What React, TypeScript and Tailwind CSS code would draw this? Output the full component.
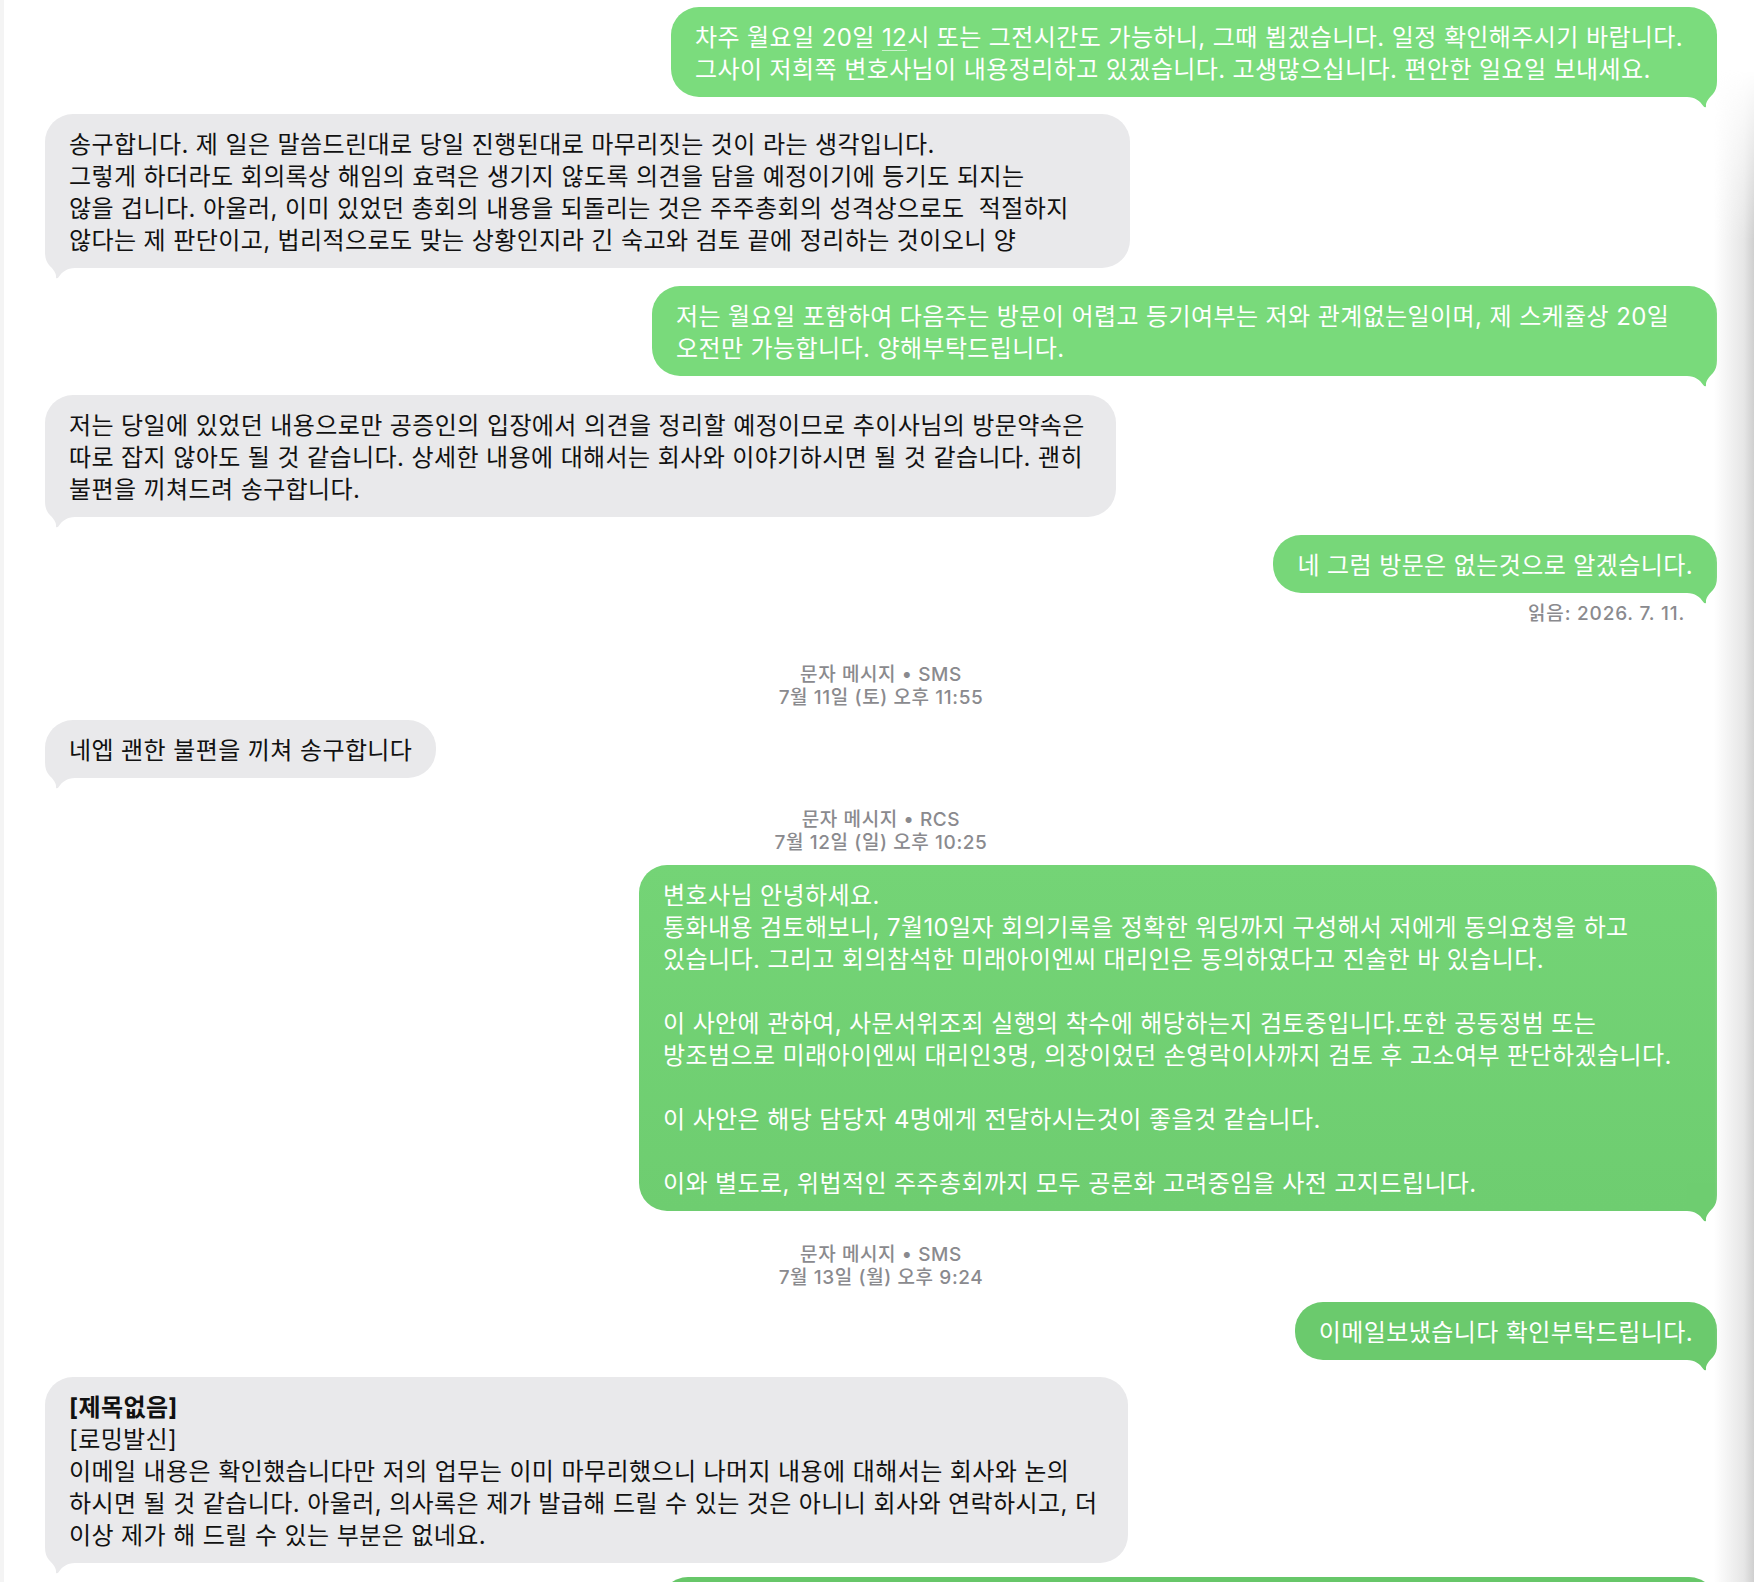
import type { ReactNode } from "react";

type TailProps = {
  side: "left" | "right";
  color: string;
};

// 말풍선 꼬리: 오른쪽 기준으로 그리고 왼쪽은 뒤집어서 사용
const Tail = ({ side, color }: TailProps): JSX.Element => (
  <svg
    className={
      side === "right"
        ? "absolute bottom-[-11px] right-0 h-[40px] w-[30px]"
        : "absolute bottom-[-11px] left-0 h-[40px] w-[30px] -scale-x-100"
    }
    viewBox="0 0 30 40"
  >
    <path
      d="M0,29 C8,29 13,33 16.5,38.3 C17.3,39.6 19.3,40 19,37.8 C18.6,34 22,30 26,26 C28.5,23 30,19 30,13 L30,1 L0,1 Z"
      fill={color}
    />
  </svg>
);

type BubbleProps = {
  children: ReactNode;
  className?: string;
  tail: string;
};

const Sent = ({ children, className = "", tail }: BubbleProps): JSX.Element => (
  <div className="flex justify-end">
    <div className={`relative whitespace-pre rounded-[28px] px-[24px] pb-[11px] pt-[15px] text-white ${className}`}>
      <Tail side="right" color={tail} />
      <div className="relative">{children}</div>
    </div>
  </div>
);

const Received = ({ children, className = "", tail }: BubbleProps): JSX.Element => (
  <div className="flex justify-start">
    <div className={`relative whitespace-pre rounded-[28px] bg-[#e9e9eb] px-[24px] pb-[11px] pt-[15px] text-[#111111] ${className}`}>
      <Tail side="left" color={tail} />
      <div className="relative">{children}</div>
    </div>
  </div>
);

type StampProps = {
  kind: string;
  time: string;
  className?: string;
};

// 날짜/메시지 종류 표시
const Stamp = ({ kind, time, className = "" }: StampProps): JSX.Element => (
  <div className={`text-center text-[19px] font-medium leading-[23px] tracking-[0.6px] text-[#8a8a8e] ${className}`}>
    <p>문자 메시지 • {kind}</p>
    <p>{time}</p>
  </div>
);

const App = (): JSX.Element => {
  return (
    <div className="relative h-[1582px] w-[1754px] overflow-hidden border-l-4 border-[#f4f4f4] bg-white font-['Inter','Noto_Sans_CJK_KR',sans-serif] text-[24px] leading-[32px] tracking-[0.4px]">
      <div className="flex flex-col pl-[41px] pr-[37px] pt-[7px]">
        <Sent className="w-[1046px] bg-[#7bdc7d]" tail="#7bdc7d">
          {"차주 월요일 20일 "}
          <span className="underline decoration-white/60 decoration-1 underline-offset-4">12</span>
          {"시 또는 그전시간도 가능하니, 그때 뵙겠습니다. 일정 확인해주시기 바랍니다.\n그사이 저희쪽 변호사님이 내용정리하고 있겠습니다. 고생많으십니다. 편안한 일요일 보내세요."}
        </Sent>

        <div className="mt-[17px]">
          <Received className="w-[1085px]" tail="#e9e9eb">
            {"송구합니다. 제 일은 말씀드린대로 당일 진행된대로 마무리짓는 것이 라는 생각입니다.\n그렇게 하더라도 회의록상 해임의 효력은 생기지 않도록 의견을 담을 예정이기에 등기도 되지는\n않을 겁니다. 아울러, 이미 있었던 총회의 내용을 되돌리는 것은 주주총회의 성격상으로도  적절하지\n않다는 제 판단이고, 법리적으로도 맞는 상황인지라 긴 숙고와 검토 끝에 정리하는 것이오니 양"}
          </Received>
        </div>

        <div className="mt-[18px]">
          <Sent className="w-[1065px] bg-[#79da7b]" tail="#79da7b">
            {"저는 월요일 포함하여 다음주는 방문이 어렵고 등기여부는 저와 관계없는일이며, 제 스케쥴상 20일\n오전만 가능합니다. 양해부탁드립니다."}
          </Sent>
        </div>

        <div className="mt-[19px]">
          <Received className="w-[1071px]" tail="#e9e9eb">
            {"저는 당일에 있었던 내용으로만 공증인의 입장에서 의견을 정리할 예정이므로 추이사님의 방문약속은\n따로 잡지 않아도 될 것 같습니다. 상세한 내용에 대해서는 회사와 이야기하시면 될 것 같습니다. 괜히\n불편을 끼쳐드려 송구합니다."}
          </Received>
        </div>

        <div className="mt-[18px]">
          <Sent className="bg-[#77d779]" tail="#77d779">
            네 그럼 방문은 없는것으로 알겠습니다.
          </Sent>
        </div>
        <p className="mt-[11px] pr-[32px] text-right text-[19px] font-medium leading-[20px] tracking-[0.8px] text-[#8a8a8e]">읽음: 2026. 7. 11.</p>

        <Stamp className="mt-[39px]" kind="SMS" time="7월 11일 (토) 오후 11:55" />

        <div className="mt-[11px]">
          <Received tail="#e9e9eb">네엡 괜한 불편을 끼쳐 송구합니다</Received>
        </div>

        <Stamp className="mt-[30px]" kind="RCS" time="7월 12일 (일) 오후 10:25" />

        <div className="mt-[11px]">
          <Sent className="w-[1078px] bg-linear-to-b from-[#74d476] to-[#6ecd70]" tail="#6ecd70">
            {"변호사님 안녕하세요.\n통화내용 검토해보니, 7월10일자 회의기록을 정확한 워딩까지 구성해서 저에게 동의요청을 하고\n있습니다. 그리고 회의참석한 미래아이엔씨 대리인은 동의하였다고 진술한 바 있습니다.\n\n이 사안에 관하여, 사문서위조죄 실행의 착수에 해당하는지 검토중입니다.또한 공동정범 또는\n방조범으로 미래아이엔씨 대리인3명, 의장이었던 손영락이사까지 검토 후 고소여부 판단하겠습니다.\n\n이 사안은 해당 담당자 4명에게 전달하시는것이 좋을것 같습니다.\n\n이와 별도로, 위법적인 주주총회까지 모두 공론화 고려중임을 사전 고지드립니다."}
          </Sent>
        </div>

        <Stamp className="mt-[32px]" kind="SMS" time="7월 13일 (월) 오후 9:24" />

        <div className="mt-[13px]">
          <Sent className="bg-[#6bca6d]" tail="#6bca6d">
            이메일보냈습니다 확인부탁드립니다.
          </Sent>
        </div>

        <div className="mt-[17px]">
          <Received className="w-[1083px]" tail="#e9e9eb">
            <span className="font-bold">[제목없음]</span>
            {"\n[로밍발신]\n이메일 내용은 확인했습니다만 저의 업무는 이미 마무리했으니 나머지 내용에 대해서는 회사와 논의\n하시면 될 것 같습니다. 아울러, 의사록은 제가 발급해 드릴 수 있는 것은 아니니 회사와 연락하시고, 더\n이상 제가 해 드릴 수 있는 부분은 없네요."}
          </Received>
        </div>

        <div className="mt-[14px]">
          <Sent className="h-[80px] w-[1057px] bg-[#67c769]" tail="#67c769">
            {" "}
          </Sent>
        </div>
      </div>

      {/* 오른쪽 가장자리 그림자 */}
      <div className="pointer-events-none absolute right-0 top-0 h-full w-[40px] bg-[linear-gradient(to_left,#cfcfcf,#e6e6e6_25%,rgba(255,255,255,0)_100%)] [mask-image:linear-gradient(to_bottom,transparent_70px,black_240px)]" />
    </div>
  );
};

export default App;
